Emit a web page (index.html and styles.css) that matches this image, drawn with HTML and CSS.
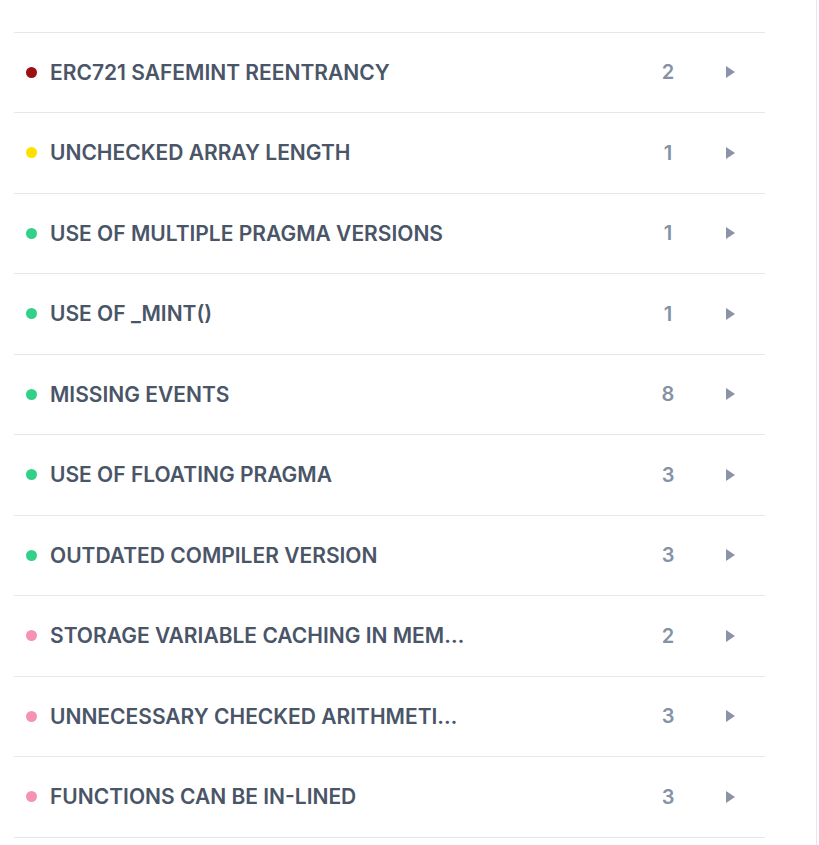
FILE: index.html
```html
<!DOCTYPE html>
<html>
<head>
<meta charset="utf-8">
<link rel="stylesheet" href="styles.css">
</head>
<body>
<div class="page">
  <ul class="issues">
    <li class="issue"><span class="dot dot-high"></span><span class="title">ERC721 SAFEMINT REENTRANCY</span><span class="count">2</span><span class="chev"></span></li>
    <li class="issue"><span class="dot dot-medium"></span><span class="title">UNCHECKED ARRAY LENGTH</span><span class="count">1</span><span class="chev"></span></li>
    <li class="issue"><span class="dot dot-low"></span><span class="title">USE OF MULTIPLE PRAGMA VERSIONS</span><span class="count">1</span><span class="chev"></span></li>
    <li class="issue"><span class="dot dot-low"></span><span class="title">USE OF _MINT()</span><span class="count">1</span><span class="chev"></span></li>
    <li class="issue"><span class="dot dot-low"></span><span class="title">MISSING EVENTS</span><span class="count">8</span><span class="chev"></span></li>
    <li class="issue"><span class="dot dot-low"></span><span class="title">USE OF FLOATING PRAGMA</span><span class="count">3</span><span class="chev"></span></li>
    <li class="issue"><span class="dot dot-low"></span><span class="title">OUTDATED COMPILER VERSION</span><span class="count">3</span><span class="chev"></span></li>
    <li class="issue"><span class="dot dot-gas"></span><span class="title">STORAGE VARIABLE CACHING IN MEMORY</span><span class="count">2</span><span class="chev"></span></li>
    <li class="issue"><span class="dot dot-gas"></span><span class="title">UNNECESSARY CHECKED ARITHMETIC IN LOOP</span><span class="count">3</span><span class="chev"></span></li>
    <li class="issue"><span class="dot dot-gas"></span><span class="title">FUNCTIONS CAN BE IN-LINED</span><span class="count">3</span><span class="chev"></span></li>
  </ul>
  <div class="side"></div>
</div>
</body>
</html>
```

FILE: styles.css
```css
* { box-sizing: border-box; }
html, body {
  margin: 0;
  padding: 0;
  background: #ffffff;
  overflow: hidden;
}
body {
  font-family: Inter, "Noto Sans", sans-serif;
  width: 819px;
  height: 845px;
}
.page {
  display: flex;
  height: 845px;
}
.issues {
  list-style: none;
  margin: 31.5px 0 0 14px;
  padding: 0;
  width: 751px;
  border-top: 1px solid #e3e8ef;
  align-self: flex-start;
}
.issue {
  display: flex;
  align-items: center;
  height: 80.5px;
  padding: 0 30px 0 12px;
  border-bottom: 1px solid #e3e8ef;
}
.dot {
  flex: none;
  width: 11px;
  height: 11px;
  border-radius: 50%;
  margin-right: 13px;
}
.dot-high { background: #9b1010; }
.dot-medium { background: #ffe100; }
.dot-low { background: #33d08a; }
.dot-gas { background: #f693b4; }
.title {
  flex: none;
  width: 416px;
  white-space: nowrap;
  overflow: hidden;
  text-overflow: ellipsis;
  font-size: 21px;
  font-weight: 600;
  color: #4a5568;
}
.count {
  margin-left: auto;
  width: 40px;
  text-align: center;
  font-size: 20px;
  font-weight: 600;
  color: #8592a6;
}
.chev {
  flex: none;
  margin-left: 38px;
  width: 0;
  height: 0;
  border-top: 6px solid transparent;
  border-bottom: 6px solid transparent;
  border-left: 9px solid #8a94a6;
}
.side {
  margin-left: 51px;
  width: 1px;
  height: 845px;
  background: #e3e8f0;
}
```
